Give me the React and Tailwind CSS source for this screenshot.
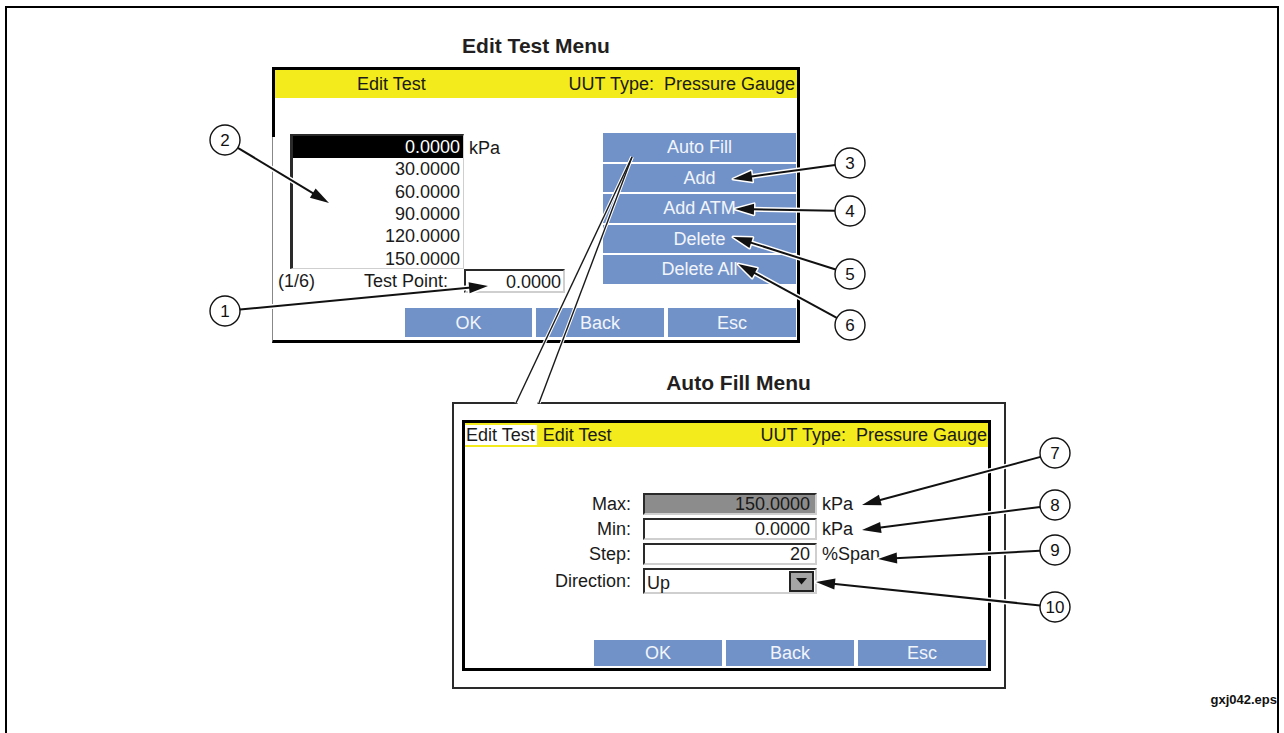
import React from "react";

const callouts = [
  { n: "1", c: [225, 311], t: [488, 286] },
  { n: "2", c: [225, 140], t: [329, 203] },
  { n: "3", c: [850, 163], t: [733, 179] },
  { n: "4", c: [850, 211], t: [735, 209] },
  { n: "5", c: [850, 274], t: [733, 237] },
  { n: "6", c: [850, 325], t: [738, 264] },
  { n: "7", c: [1055, 453], t: [862, 505] },
  { n: "8", c: [1055, 505], t: [862, 530] },
  { n: "9", c: [1055, 550], t: [878, 559] },
  { n: "10", c: [1055, 607], t: [816, 582] },
];

function Callout({ n, c, t }) {
  const r = 15;
  const L = 19;
  const W = 5.5;
  const dx = t[0] - c[0];
  const dy = t[1] - c[1];
  const len = Math.hypot(dx, dy);
  const ux = dx / len;
  const uy = dy / len;
  const sx = c[0] + r * ux;
  const sy = c[1] + r * uy;
  const bx = t[0] - L * ux;
  const by = t[1] - L * uy;
  const px = -uy;
  const py = ux;
  const head = `${t[0]},${t[1]} ${bx + W * px},${by + W * py} ${bx - W * px},${by - W * py}`;
  return (
    <g>
      <line x1={sx} y1={sy} x2={bx + 2 * ux} y2={by + 2 * uy} stroke="#fff" strokeWidth="5" />
      <polygon points={head} fill="#fff" stroke="#fff" strokeWidth="3" strokeLinejoin="round" />
      <line x1={sx} y1={sy} x2={bx + 2 * ux} y2={by + 2 * uy} stroke="#111" strokeWidth="2" />
      <polygon points={head} fill="#111" />
      <circle cx={c[0]} cy={c[1]} r={r} fill="#fff" stroke="#111" strokeWidth="1.4" />
      <text
        x={c[0]}
        y={c[1] + 6}
        textAnchor="middle"
        fontSize="17"
        fontFamily="Liberation Sans, Arial, sans-serif"
        fill="#111"
      >
        {n}
      </text>
    </g>
  );
}

const sunken =
  "border-t-2 border-l-2 border-r-2 border-b-2 border-t-[#2a2a2a] border-l-[#2a2a2a] border-r-[#cfcfcf] border-b-[#cfcfcf]";

function BlueBtn({ children, className }) {
  return (
    <div
      className={`bg-[#7192c9] text-[#f2f5fa] flex items-center justify-center leading-none ${className}`}
    >
      {children}
    </div>
  );
}

function EditTestScreen() {
  const rows = ["30.0000", "60.0000", "90.0000", "120.0000", "150.0000"];
  return (
    <div className="absolute left-[272px] top-[67px] w-[528px] h-[276px] border-[3px] border-black border-l-[1px] border-l-[#888] bg-white flex flex-col text-[18px] text-[#1a1a1a]">
      <div className="absolute left-[-1px] top-[-3px] w-[3px] h-[70px] bg-black" />
      <div className="h-[28px] bg-[#f3eb1b] flex items-center leading-none">
        <span className="pl-[84px]">Edit Test</span>
        <span className="ml-auto pr-[2px] whitespace-pre">UUT Type:  Pressure Gauge</span>
      </div>
      <div className="flex mt-[35px]">
        <div className="flex flex-col mt-[1px] w-[292px]">
          <div className="flex items-start pl-[17px]">
            <div className="w-[174px] h-[135px] bg-white border-t-2 border-l-[3px] border-r-1 border-b-1 border-t-[#2a2a2a] border-l-[#2a2a2a] border-r-[#cfcfcf] border-b-[#cfcfcf] flex flex-col">
              <div className="h-[22px] shrink-0 bg-black text-white flex items-center justify-end pr-[3px] leading-none">0.0000</div>
              {rows.map((r) => (
                <div key={r} className="h-[22.4px] shrink-0 flex items-center justify-end pr-[3px] leading-none">
                  {r}
                </div>
              ))}
            </div>
            <span className="ml-[5px] mt-[3px] leading-[22px]">kPa</span>
          </div>
          <div className="flex items-center h-[24px] pl-[5px]">
            <span className="w-[86px]">(1/6)</span>
            <span className="w-[100px]">Test Point:</span>
            <div className={`w-[101px] h-[24px] ${sunken} flex items-center justify-end pr-[2px] pt-[2px] leading-none`}>0.0000</div>
          </div>
        </div>
        <div className="ml-auto mr-[1px] w-[193px] flex flex-col gap-[2px]">
          <BlueBtn className="h-[28.5px]">Auto Fill</BlueBtn>
          <BlueBtn className="h-[28.5px]">Add</BlueBtn>
          <BlueBtn className="h-[28.5px]">Add ATM</BlueBtn>
          <BlueBtn className="h-[28.5px]">Delete</BlueBtn>
          <BlueBtn className="h-[28.5px]">Delete All</BlueBtn>
        </div>
      </div>
      <div className="mt-auto flex justify-end gap-[4px] pr-[1px] pb-[3px]">
        <BlueBtn className="w-[127px] h-[29px]">OK</BlueBtn>
        <BlueBtn className="w-[128px] h-[29px]">Back</BlueBtn>
        <BlueBtn className="w-[128px] h-[29px]">Esc</BlueBtn>
      </div>
    </div>
  );
}

function FormRow({ label, children, h = "h-[22px]" }) {
  return (
    <div className={`flex items-center ${h}`}>
      <span className="w-[166px] text-right">{label}</span>
      <div className="ml-[12px] flex items-center h-full">{children}</div>
    </div>
  );
}

function AutoFillScreen() {
  return (
    <div className="absolute left-[462px] top-[420px] w-[529px] h-[251px] border-[3px] border-black bg-white flex flex-col text-[18px] text-[#1a1a1a]">
      <div className="h-[24px] bg-[#f3eb1b] flex items-center leading-none">
        <span className="bg-white h-[20px] flex items-center pl-[1px] pr-[2px]">Edit Test</span>
        <span className="ml-[6px]">Edit Test</span>
        <span className="ml-auto pr-[1px] whitespace-pre">UUT Type:  Pressure Gauge</span>
      </div>
      <div className="mt-[46px] flex flex-col gap-[3px] leading-none">
        <FormRow label="Max:">
          <div className={`w-[174px] h-[22px] ${sunken} bg-[#8c8c8c] pr-[5px] flex items-center justify-end`}>150.0000</div>
          <span className="ml-[5px]">kPa</span>
        </FormRow>
        <FormRow label="Min:">
          <div className={`w-[174px] h-[22px] ${sunken} bg-white pr-[5px] flex items-center justify-end`}>0.0000</div>
          <span className="ml-[5px]">kPa</span>
        </FormRow>
        <FormRow label="Step:">
          <div className={`w-[174px] h-[22px] ${sunken} bg-white pr-[5px] flex items-center justify-end`}>20</div>
          <span className="ml-[5px]">%Span</span>
        </FormRow>
        <FormRow label="Direction:" h="h-[26px]">
          <div className={`w-[174px] h-[26px] ${sunken} bg-white flex items-center pl-[2px]`}>
            <span className="pt-[3px]">Up</span>
            <div className="ml-auto mr-[1px] w-[25px] h-[21px] bg-[#a5a5a5] border-2 border-[#222] flex items-center justify-center">
              <svg width="11" height="7" viewBox="0 0 11 7">
                <polygon points="0,0 11,0 5.5,6.5" fill="#111" />
              </svg>
            </div>
          </div>
        </FormRow>
      </div>
      <div className="mt-auto flex justify-end gap-[4px] pr-[2px] pb-[2px]">
        <BlueBtn className="w-[128px] h-[26px]">OK</BlueBtn>
        <BlueBtn className="w-[128px] h-[26px]">Back</BlueBtn>
        <BlueBtn className="w-[128px] h-[26px]">Esc</BlueBtn>
      </div>
    </div>
  );
}

export default function App() {
  return (
    <div className="relative w-[1284px] h-[733px] overflow-hidden bg-white font-['Liberation_Sans',Arial,sans-serif]">
      <div className="ml-[5px] mr-[5px] mt-[6px] h-[760px] border-t-2 border-l-2 border-r-2 border-black" />

      <div className="absolute left-[272px] top-[33px] w-[528px] text-center font-bold text-[21px] leading-[26px] text-[#231f20]">
        Edit Test Menu
      </div>
      <EditTestScreen />

      <div className="absolute left-[452px] top-[370px] w-[573px] text-center font-bold text-[21px] leading-[26px] text-[#231f20]">
        Auto Fill Menu
      </div>
      <div className="absolute left-[452px] top-[402px] w-[554px] h-[287px] border-2 border-[#2a2a2a]" />
      <AutoFillScreen />

      <div className="absolute right-[7px] top-[692px] font-bold text-[13px] leading-[16px] text-[#111]">
        gxj042.eps
      </div>

      <svg className="absolute inset-0 pointer-events-none" width="1284" height="733" viewBox="0 0 1284 733">
        <line x1="518" y1="403" x2="537.5" y2="403" stroke="#fff" strokeWidth="3" />
        <line x1="632" y1="157" x2="516" y2="403" stroke="#fff" strokeWidth="3.5" />
        <line x1="632" y1="157" x2="539" y2="403" stroke="#fff" strokeWidth="3.5" />
        <line x1="632" y1="157" x2="516" y2="403" stroke="#1a1a1a" strokeWidth="1.4" />
        <line x1="632" y1="157" x2="539" y2="403" stroke="#1a1a1a" strokeWidth="1.4" />
        {callouts.map((co) => (
          <Callout key={co.n} {...co} />
        ))}
      </svg>
    </div>
  );
}
